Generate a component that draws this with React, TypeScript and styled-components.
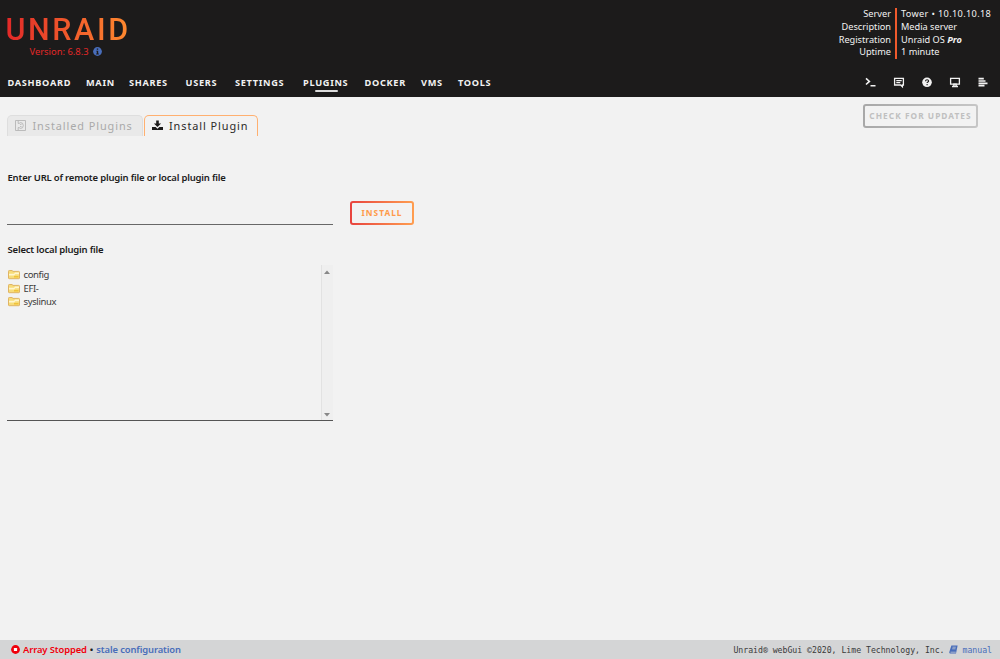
import React from "react";
import styled, { createGlobalStyle } from "styled-components";

const sans = `"Noto Sans", "Open Sans", sans-serif`;

const Global = createGlobalStyle`
  * { box-sizing: border-box; }
  body { margin: 0; background: #f2f2f2; color: #1c1b1b; font-family: ${sans}; font-size: 9.5px; }
`;

const Page = styled.div`
  display: flex;
  flex-direction: column;
  height: 659px;
  overflow: hidden;
`;

const Header = styled.header`
  height: 97px;
  background: #1c1b1b;
  color: #f2f2f2;
  display: flex;
  flex-direction: column;
  justify-content: space-between;
`;

const Top = styled.div`
  display: flex;
  justify-content: space-between;
  height: 68px;
`;

const Brand = styled.div`
  padding: 12px 0 0 5.5px;
  width: 140px;
`;

const Logo = styled.div`
  font: 500 30.5px/36px Roboto, sans-serif;
  letter-spacing: 2.6px;
  width: 126px;
  white-space: nowrap;
  color: transparent;
  background: linear-gradient(90deg, #e22828, #ff8c2f);
  background-clip: text;
  -webkit-background-clip: text;
`;

const Version = styled.div`
  display: flex;
  align-items: center;
  gap: 4.5px;
  padding-left: 24px;
  margin-top: -3px;
  line-height: 13px;
  font-size: 9.4px;
  color: #e22828;
  white-space: nowrap;
`;

const Info = styled.div`
  display: grid;
  grid-template-columns: auto auto;
  padding: 8px 5px 0 0;
  height: 59px;
  line-height: 12.8px;
  font-size: 9.2px;
  white-space: nowrap;
`;

const Labels = styled.div`
  text-align: right;
  padding-right: 4px;
  border-right: 2px solid #f15a2c;
`;

const Values = styled.div`
  padding-left: 4px;
  width: 98px;
`;

const Line = styled.div<{ $ls?: number }>`
  letter-spacing: ${(p) => p.$ls ?? 0}px;
`;

const NavBar = styled.nav`
  display: flex;
  align-items: center;
  justify-content: space-between;
  height: 29px;
  padding: 0 11px 0 7.5px;
`;

const Menu = styled.div`
  display: flex;
`;

const MenuItem = styled.a<{ $w: number; $active?: boolean }>`
  width: ${(p) => p.$w}px;
  height: 20px;
  font-weight: 700;
  font-size: 9.2px;
  line-height: 20px;
  letter-spacing: 0.7px;
  white-space: nowrap;
  &::after {
    content: "";
    display: ${(p) => (p.$active ? "block" : "none")};
    width: 23px;
    height: 2px;
    margin-left: 12px;
    margin-top: -3px;
    background: #dcdcdc;
    border-radius: 1px;
  }
`;

const Tools = styled.div`
  display: flex;
  gap: 16px;
`;

const Main = styled.main`
  flex: 1;
  padding: 7px 22px 0 7px;
`;

const TabRow = styled.div`
  display: flex;
  justify-content: space-between;
  height: 32px;
`;

const Tabs = styled.div`
  display: flex;
  gap: 1px;
  padding-top: 11px;
`;

const Tab = styled.div<{ $active?: boolean; $w: number }>`
  display: flex;
  align-items: center;
  gap: 6.5px;
  width: ${(p) => p.$w}px;
  height: 21px;
  padding: 0 0 1px 7px;
  border: 1px solid ${(p) => (p.$active ? "#ffb070" : "#dedede")};
  border-bottom: 0;
  border-radius: 5px 5px 0 0;
  background: ${(p) => (p.$active ? "#f2f2f2" : "#e9e9e9")};
  color: ${(p) => (p.$active ? "#2b2a29" : "#a9a9a9")};
  font-size: 10.9px;
  line-height: 18px;
  letter-spacing: 0.92px;
  white-space: nowrap;
`;

const Button = styled.button<{ $w: number; $muted?: boolean }>`
  width: ${(p) => p.$w}px;
  height: 24px;
  padding: 0;
  border: 2px solid transparent;
  border-radius: 3px;
  font: 700 8.3px/20px ${sans};
  letter-spacing: 1.05px;
  white-space: nowrap;
  color: ${(p) => (p.$muted ? "#c0c0c0" : "#ff9a4a")};
  background:
    linear-gradient(#f2f2f2, #f2f2f2) padding-box,
    ${(p) => (p.$muted ? "linear-gradient(90deg, #a8a8a8, #c6c6c6)" : "linear-gradient(90deg, #e8433e, #ff9e50)")} border-box;
`;

const Label = styled.div<{ $top?: number }>`
  margin-top: ${(p) => p.$top ?? 0}px;
  padding-left: 0.5px;
  font-size: 9.5px;
  font-weight: 600;
  line-height: 14px;
  letter-spacing: -0.19px;
`;

const UrlRow = styled.div`
  display: flex;
  gap: 17px;
  margin: 16px 0 17px;
  height: 25px;
`;

const UrlInput = styled.input`
  width: 326px;
  height: 24px;
  border: 0;
  border-bottom: 1px solid #686868;
  background: transparent;
  outline: 0;
`;

const FileBox = styled.div`
  display: flex;
  justify-content: space-between;
  width: 326px;
  height: 156px;
  margin-top: 8px;
  border-bottom: 1px solid #555;
`;

const FileList = styled.div`
  padding: 3px 0 0 0.5px;
`;

const FileRow = styled.div`
  display: flex;
  align-items: center;
  gap: 4px;
  height: 13.5px;
  font-size: 9.5px;
  letter-spacing: -0.38px;
  color: #3b3a3a;
`;

const Scroll = styled.div`
  display: flex;
  flex-direction: column;
  justify-content: space-between;
  align-items: center;
  width: 12px;
  padding: 5px 1px 3px 0;
  border-left: 1px solid #e2e2e2;
  background: #efefef;
`;

const Footer = styled.footer`
  display: flex;
  align-items: center;
  justify-content: space-between;
  height: 19px;
  padding: 0 8px 0 11px;
  background: #d4d5d6;
  white-space: nowrap;
`;

const Status = styled.div`
  display: flex;
  align-items: center;
  gap: 3px;
  font-size: 9.4px;
  font-weight: 600;
  letter-spacing: -0.1px;
`;

const Red = styled.span`
  color: #f0000c;
`;

const Blue = styled.span`
  color: #486dba;
`;

const Copy = styled.div`
  display: flex;
  align-items: center;
  gap: 4.5px;
  font: 8.2px "DejaVu Sans Mono", monospace;
  letter-spacing: -0.02px;
  color: #3a3a3a;
`;

const Folder = () => (
  <svg width="12" height="11" viewBox="0 0 12 11">
    <path d="M.5 9V2.3q0-.8.8-.8H4l1 .9h5.7q.8 0 .8.8V9q0 .7-.7.7H1.2Q.5 9.7.5 9z" fill="#f7dc79" stroke="#dfb464" />
    <path d="M1 4.8h5l1-1.2h4v1.6H7.2L6.2 6.4H1z" fill="#fff6cf" />
    <path d="M6 7h4.5v1.5H6z" fill="#f0c239" />
  </svg>
);

const menu: [string, number][] = [
  ["DASHBOARD", 78.5], ["MAIN", 43], ["SHARES", 56.5], ["USERS", 49.5], ["SETTINGS", 68],
  ["PLUGINS", 61.5], ["DOCKER", 56.5], ["VMS", 37], ["TOOLS", 40],
];

export default function App() {
  return (
    <Page>
      <Global />
      <Header>
        <Top>
          <Brand>
            <Logo>UNRAID</Logo>
            <Version>
              Version: 6.8.3
              <svg width="9" height="9" viewBox="0 0 9 9">
                <circle cx="4.5" cy="4.5" r="4.4" fill="#486dba" />
                <path d="M3.8 1.5h1.4v1.3H3.8zM3.3 3.7h1.9v2.7h.6v1H3.2v-1h.6V4.6h-.5z" fill="#1c1b1b" />
              </svg>
            </Version>
          </Brand>
          <Info>
            <Labels>
              <Line>Server</Line>
              <Line>Description</Line>
              <Line>Registration</Line>
              <Line>Uptime</Line>
            </Labels>
            <Values>
              <Line $ls={0.34}>Tower • 10.10.10.18</Line>
              <Line>Media server</Line>
              <Line>Unraid OS <b><i>Pro</i></b></Line>
              <Line>1 minute</Line>
            </Values>
          </Info>
        </Top>
        <NavBar>
          <Menu>
            {menu.map(([name, w]) => (
              <MenuItem key={name} $w={w} $active={name === "PLUGINS"}>{name}</MenuItem>
            ))}
          </Menu>
          <Tools>
            <svg width="12" height="12" viewBox="0 0 12 12" fill="none" stroke="#f2f2f2" strokeWidth="1.6">
              <path d="M1 1.3l3.4 3.1L1 7.5M5.5 8.8h5" />
            </svg>
            <svg width="12" height="12" viewBox="0 0 12 12" fill="none" stroke="#f2f2f2" strokeWidth="1.3">
              <path d="M1.6 1.4h8.8V8H9.4v1.7L7.6 8h-6z" />
              <path d="M3.3 3.7h5.4M3.3 5.7h4" />
            </svg>
            <svg width="12" height="12" viewBox="0 0 12 12" fill="none">
              <circle cx="6" cy="5.3" r="4.8" fill="#f2f2f2" />
              <path d="M4.5 4.3q0-1.5 1.6-1.5 1.5 0 1.5 1.2 0 .7-.8 1.1-.7.3-.7 1M6.1 7v1.2" stroke="#1c1b1b" strokeWidth="1.1" />
            </svg>
            <svg width="12" height="12" viewBox="0 0 12 12" fill="none" stroke="#f2f2f2" strokeWidth="1.3">
              <path d="M1.6 1.3h8.8v5.9H1.6z" />
              <path d="M4.8 7.2h2.4v2H4.8zM3 9.5h6" />
            </svg>
            <svg width="12" height="12" viewBox="0 0 12 12" fill="none" stroke="#f2f2f2" strokeWidth="1.7">
              <path d="M1.5 1.7h5.3M1.5 4h7M1.5 6.3h9M1.5 8.6h6" />
            </svg>
          </Tools>
        </NavBar>
      </Header>
      <Main>
        <TabRow>
          <Tabs>
            <Tab $w={135.5}>
              <svg width="11" height="11" viewBox="0 0 11 11" fill="none" stroke="#b5b5b5" strokeWidth=".9">
                <path d="M.5.5h10v10H.5zM3.2.8v2.7h1.5M3.2 10.2V7.5h1.5M4.7 2.5h.6a3 3 0 010 6h-.6M5 4.4h1.5M5 6.6h1.5" />
              </svg>
              Installed Plugins
            </Tab>
            <Tab $w={114.5} $active>
              <svg width="11" height="11" viewBox="0 0 11 11" fill="#1c1b1b">
                <path d="M4.2 .5h2.6v3h2.3L5.5 7.1 1.9 3.5h2.3zM0 7h3.6l1.9 1.7L7.4 7H11v3H0z" />
              </svg>
              Install Plugin
            </Tab>
          </Tabs>
          <Button $w={115} $muted>CHECK FOR UPDATES</Button>
        </TabRow>
        <Label $top={35}>Enter URL of remote plugin file or local plugin file</Label>
        <UrlRow>
          <UrlInput />
          <Button $w={64}>INSTALL</Button>
        </UrlRow>
        <Label>Select local plugin file</Label>
        <FileBox>
          <FileList>
            <FileRow><Folder />config</FileRow>
            <FileRow><Folder />EFI-</FileRow>
            <FileRow><Folder />syslinux</FileRow>
          </FileList>
          <Scroll>
            <svg width="6" height="4" viewBox="0 0 6 4"><path d="M0 4l3-3.5L6 4z" fill="#888" /></svg>
            <svg width="6" height="4" viewBox="0 0 6 4"><path d="M0 0l3 3.5L6 0z" fill="#888" /></svg>
          </Scroll>
        </FileBox>
      </Main>
      <Footer>
        <Status>
          <svg width="9" height="9" viewBox="0 0 9 9">
            <circle cx="4.5" cy="4.5" r="4.4" fill="#f0000c" />
            <rect x="2.9" y="2.9" width="3.2" height="3.2" rx=".5" fill="#fff" />
          </svg>
          <Red>Array Stopped</Red>
          <span>•</span>
          <Blue>stale configuration</Blue>
        </Status>
        <Copy>
          Unraid® webGui ©2020, Lime Technology, Inc.
          <svg width="9" height="9" viewBox="0 0 9 9">
            <path d="M2.4.4h6.2L7 8.5H1Q0 8.3.3 7z" fill="#486dba" />
            <path d="M3.5 2.2h3.3M3.2 3.8h3.3M1.5 7.2h5.3" stroke="#d4d5d6" strokeWidth=".7" />
          </svg>
          <Blue>manual</Blue>
        </Copy>
      </Footer>
    </Page>
  );
}
